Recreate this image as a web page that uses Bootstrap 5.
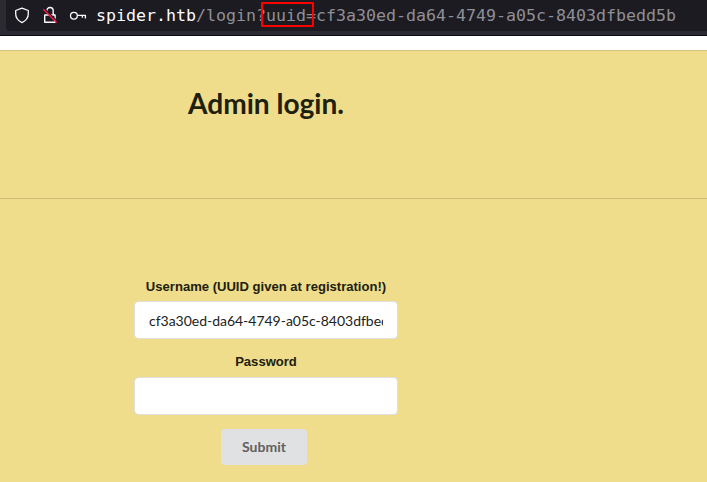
<!DOCTYPE html>
<html lang="en">
<head>
<meta charset="utf-8">
<meta name="viewport" content="width=device-width, initial-scale=1">
<title>Admin login</title>
<link href="https://cdn.jsdelivr.net/npm/bootstrap@5.3.0/dist/css/bootstrap.min.css" rel="stylesheet">
<style>
body{font-family:Lato,"Liberation Sans",sans-serif;font-size:14px;background:#efdd8b;color:#20200f;height:482px}
.toolbar{height:36px;background:#2b2a33;border-bottom:1px solid #0c0c0d;padding-left:6px}
.urlbar{height:31px;background:#1c1b22;border-radius:0 0 0 4px;padding-left:8px}
.urlbar svg{display:block;flex:none}
.url{font:16.61px/31px "DejaVu Sans Mono",monospace;color:#8f8f96;margin-left:6px;white-space:pre}
.url b{font-weight:400;color:#fbfbfe}
.marked{position:relative}
.marked::after{content:"";position:absolute;left:-5px;top:-4px;width:53px;height:25px;border:2px solid #f00;border-radius:1px}
.strip{height:15px;border-bottom:1px solid #d3c47d}
.heading{height:148px;border-bottom:1px solid #cdbe78;padding-top:34px}
.column{width:264px;margin-left:134px}
h1{font-size:28.1px;font-weight:700;line-height:36px}
.login{padding-top:79px}
.form-label{font:bold 13.07px/18px "Liberation Sans",Arial,sans-serif;margin-bottom:5px;white-space:nowrap}
.form-label.second{margin-top:14px;margin-bottom:6px}
.form-control{height:38px;border-color:#dedfdf;font-size:14px;letter-spacing:-.02px;padding:0 14px;color:#222;border-radius:4px}
.btn-submit{width:86px;height:36px;margin:14px 4px 0 0;background:#e0e1e2;color:#606060;font-weight:700;font-size:14px;border:0;border-radius:4px;padding:0 0 2px}
</style>
</head>
<body class="overflow-hidden">
<header class="toolbar">
  <div class="urlbar d-flex align-items-center">
    <svg width="16" height="17" viewBox="0 0 16 17" fill="none" stroke="#fbfbfe" stroke-width="1.3" stroke-linejoin="round"><path d="M8 1.200 14.300 3.500V7c0 4-2.700 6.800-6.300 8.600C4.400 13.800 1.700 11 1.700 7V3.500Z"/></svg>
    <svg class="ms-2" width="24" height="19" viewBox="0 0 24 19" fill="none"><path d="M8.800 5V4.700a3.200 3.200 0 0 1 6.400 0v4.200M6.700 9h10.400v7.200H6.700Z" stroke="#fbfbfe" stroke-width="1.400" stroke-linejoin="round"/><path d="m6.200 2.400 13.200 13.200" stroke="#1c1b22" stroke-width="1.400"/><path d="m5.300 3.200 13.300 13.300" stroke="#ff1744" stroke-width="1.400"/></svg>
    <svg class="ms-1" width="24" height="16" viewBox="0 0 24 16" fill="none" stroke="#fbfbfe" stroke-width="1.300" stroke-linejoin="round"><circle cx="7.900" cy="7.800" r="3.400"/><path d="M11.300 7.400H19.400V10.600M16.400 7.400V9.800"/></svg>
    <div class="url"><b>spider.htb</b>/login?<span class="marked">uuid</span>=cf3a30ed-da64-4749-a05c-8403dfbedd5b</div>
  </div>
</header>
<div class="strip bg-white"></div>
<section class="heading">
  <div class="column text-center"><h1 class="mb-0">Admin login.</h1></div>
</section>
<main class="login">
  <form class="column text-center">
    <label class="form-label d-block" for="username">Username (UUID given at registration!)</label>
    <input class="form-control shadow-none" id="username" value="cf3a30ed-da64-4749-a05c-8403dfbedd5b">
    <label class="form-label second d-block" for="password">Password</label>
    <input class="form-control shadow-none" id="password" type="password">
    <button class="btn btn-submit" type="button">Submit</button>
  </form>
</main>
<script src="https://cdn.jsdelivr.net/npm/bootstrap@5.3.0/dist/js/bootstrap.bundle.min.js"></script>
</body>
</html>
